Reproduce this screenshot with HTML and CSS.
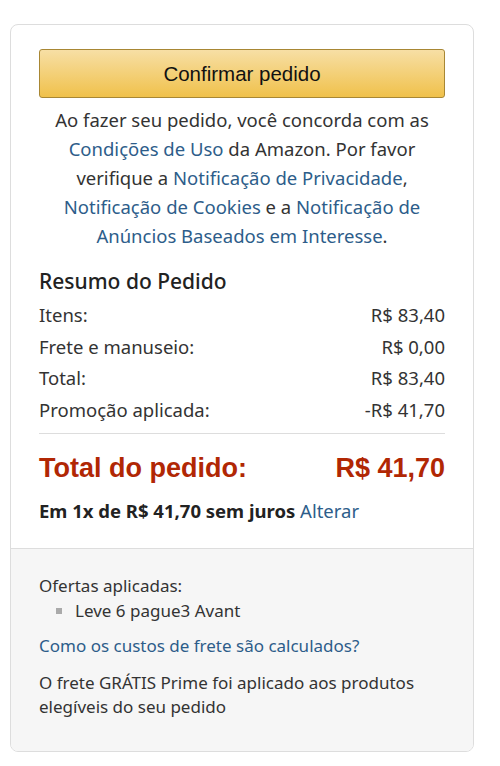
FILE: index.html
```html
<!DOCTYPE html>
<html lang="pt-BR">
<head>
  <meta charset="UTF-8">
  <meta name="viewport" content="width=device-width, initial-scale=1.0">
  <title>Resumo do Pedido</title>
  <link rel="stylesheet" href="styles.css">
</head>
<body>
  <div class="order-box">
    <div class="order-main">
      <button class="place-order">Confirmar pedido</button>
      <p class="legal">
        Ao fazer seu pedido, você concorda com as<br>
        <a href="#">Condições de Uso</a> da Amazon. Por favor<br>
        verifique a <a href="#">Notificação de Privacidade</a>,<br>
        <a href="#">Notificação de Cookies</a> e a <a href="#">Notificação de<br>
        Anúncios Baseados em Interesse</a>.
      </p>

      <h3 class="summary-title">Resumo do Pedido</h3>
      <div class="summary-row"><span>Itens:</span><span>R$ 83,40</span></div>
      <div class="summary-row"><span>Frete e manuseio:</span><span>R$ 0,00</span></div>
      <div class="summary-row"><span>Total:</span><span>R$ 83,40</span></div>
      <div class="summary-row"><span>Promoção aplicada:</span><span>-R$ 41,70</span></div>

      <div class="grand-total">
        <span>Total do pedido:</span>
        <span>R$ 41,70</span>
      </div>
      <p class="installments"><b>Em 1x de R$ 41,70 sem juros</b> <a href="#">Alterar</a></p>
    </div>

    <!-- Offers and shipping info -->
    <div class="order-extra">
      <div>Ofertas aplicadas:</div>
      <ul class="offers">
        <li>Leve 6 pague3 Avant</li>
      </ul>
      <a class="shipping-link" href="#">Como os custos de frete são calculados?</a>
      <p class="prime-note">O frete GRÁTIS Prime foi aplicado aos produtos<br>elegíveis do seu pedido</p>
    </div>
  </div>
</body>
</html>
```

FILE: styles.css
```css
body {
  margin: 0;
  font-family: "Noto Sans", "Open Sans", sans-serif;
  color: #333;
  background-color: #fff;
}

a {
  color: #2d5d8a;
  text-decoration: none;
}

.order-box {
  width: 462px;
  margin: 24px 0 0 10px;
  border: 1px solid #ddd;
  border-radius: 8px;
  overflow: hidden;
}

.order-main {
  padding: 24px 28px 25px 28px;
}

.place-order {
  display: block;
  width: 100%;
  height: 49px;
  font-family: "Liberation Sans", Arial, sans-serif;
  font-size: 20.5px;
  color: #111;
  border: 1px solid #a88734;
  border-radius: 3px;
  background: linear-gradient(to bottom, #f7dfa5, #f0c14b);
  cursor: pointer;
}

.legal {
  margin: 7px 0 0 0;
  font-size: 18.5px;
  line-height: 29px;
  text-align: center;
}

.summary-title {
  margin: 17px 0 4px 0;
  font-size: 21px;
  line-height: 28px;
  font-weight: 500;
  color: #222;
}

.summary-row {
  display: flex;
  justify-content: space-between;
  font-size: 18.5px;
  line-height: 31.7px;
}

.grand-total {
  display: flex;
  justify-content: space-between;
  margin-top: 7px;
  padding-top: 19px;
  border-top: 1px solid #ddd;
  font-family: "Liberation Sans", Arial, sans-serif;
  font-size: 27px;
  line-height: 31px;
  font-weight: bold;
  color: #b12704;
}

.installments {
  margin: 15px 0 0 0;
  font-size: 18.5px;
  line-height: 24px;
  color: #222;
}

.order-extra {
  padding: 25px 28px 32px 28px;
  background-color: #f6f6f6;
  border-top: 1px solid #ddd;
  font-size: 17px;
  line-height: 24px;
}

.offers {
  margin: 0;
  padding-left: 36px;
  line-height: 25px;
  list-style: square;
}

.offers li::marker {
  color: #aaa;
}

.shipping-link {
  display: block;
  margin-top: 11px;
}

.prime-note {
  margin: 13px 0 0 0;
}
```
